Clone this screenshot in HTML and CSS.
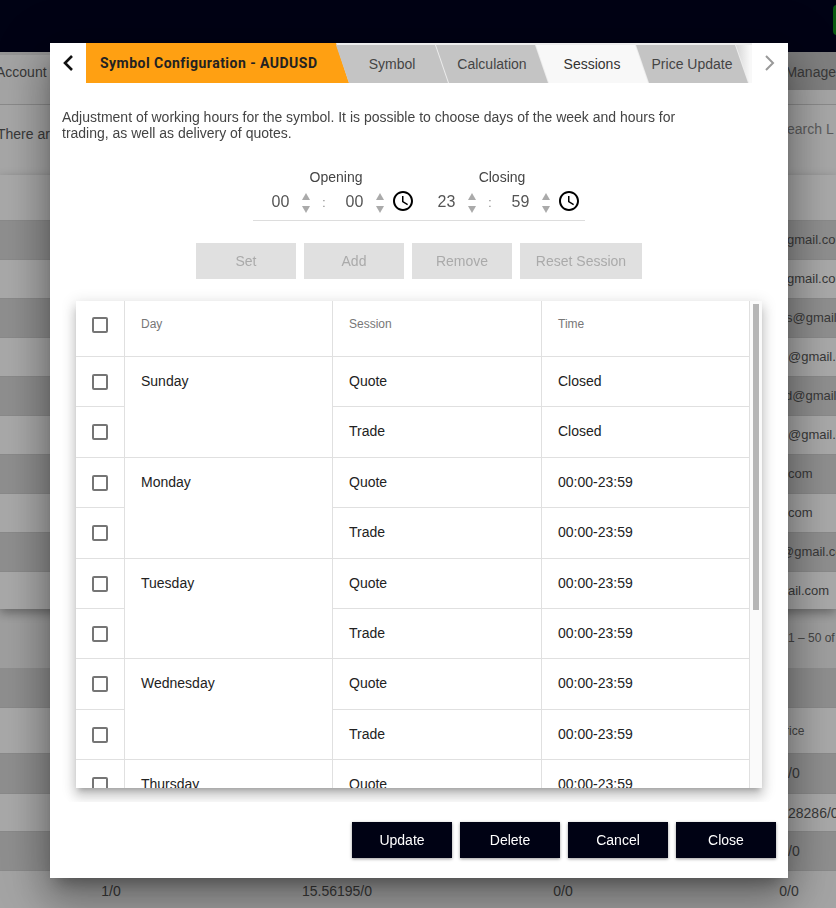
FILE: index.html
```html
<!DOCTYPE html>
<html lang="en">
<head>
    <meta charset="UTF-8">
    <meta name="viewport" content="width=device-width, initial-scale=1.0">
    <title>Symbol Configuration</title>
    <link rel="stylesheet" href="styles.css">
</head>
<body>
    <div class="page">
        <div class="topbar"><div class="status"></div></div>
        <div class="nav">
            <div class="nav-left">Account</div>
            <div class="nav-right">Manage</div>
        </div>
        <div class="strip"></div>
        <div class="search">
            <span class="search-note">There are</span>
            <span class="search-box">earch L</span>
        </div>
        <div class="users">
            <div class="row head"></div>
            <div class="row dark mail-g">gmail.com</div>
            <div class="row mail-g">gmail.com</div>
            <div class="row dark mail-s">s@gmail.com</div>
            <div class="row">@gmail.com</div>
            <div class="row dark mail-d">d@gmail.com</div>
            <div class="row">@gmail.com</div>
            <div class="row dark">com</div>
            <div class="row">com</div>
            <div class="row dark mail-w">@gmail.com</div>
            <div class="row last">ail.com</div>
        </div>
        <div class="pager">1 – 50 of</div>
        <div class="row dark tall"></div>
        <div class="row price-head">rice</div>
        <div class="row dark tall">/0</div>
        <div class="row price-row">28286/0</div>
        <div class="row dark">/0</div>
        <div class="totals">
            <span>1/0</span>
            <span>15.56195/0</span>
            <span>0/0</span>
            <span>0/0</span>
        </div>
    </div>

    <div class="overlay"></div>

    <div class="modal">
        <div class="modal-head">
            <div class="arrow">
                <svg width="12" height="18" viewBox="0 0 12 18"><path d="M10 2 L3 9 L10 16" fill="none" stroke="#111" stroke-width="2.6"/></svg>
            </div>
            <div class="tabs">
                <div class="tab-title">Symbol Configuration - AUDUSD</div>
                <div class="tab">Symbol</div>
                <div class="tab">Calculation</div>
                <div class="tab active">Sessions</div>
                <div class="tab">Price Update</div>
                <div class="tab more"></div>
            </div>
            <div class="arrow">
                <svg width="12" height="18" viewBox="0 0 12 18"><path d="M2 2 L9 9 L2 16" fill="none" stroke="#999" stroke-width="2"/></svg>
            </div>
        </div>

        <p class="desc">Adjustment of working hours for the symbol. It is possible to choose days of the week and hours for trading, as well as delivery of quotes.</p>

        <div class="times">
            <div class="time-group">
                <div class="time-label">Opening</div>
                <div class="time-row">
                    <div class="field"><span class="digits">00</span><span class="spin"><i class="up"></i><i class="down"></i></span></div>
                    <span class="colon">:</span>
                    <div class="field"><span class="digits">00</span><span class="spin"><i class="up"></i><i class="down"></i></span></div>
                    <svg class="clock" width="24" height="24" viewBox="0 0 24 24"><path d="M11.99 2C6.47 2 2 6.48 2 12s4.47 10 9.99 10C17.52 22 22 17.52 22 12S17.52 2 11.99 2zM12 20c-4.42 0-8-3.58-8-8s3.58-8 8-8 8 3.58 8 8-3.58 8-8 8zm.5-13H11v6l5.25 3.15.75-1.23-4.5-2.67z"/></svg>
                </div>
            </div>
            <div class="time-group">
                <div class="time-label">Closing</div>
                <div class="time-row">
                    <div class="field"><span class="digits">23</span><span class="spin"><i class="up"></i><i class="down"></i></span></div>
                    <span class="colon">:</span>
                    <div class="field"><span class="digits">59</span><span class="spin"><i class="up"></i><i class="down"></i></span></div>
                    <svg class="clock" width="24" height="24" viewBox="0 0 24 24"><path d="M11.99 2C6.47 2 2 6.48 2 12s4.47 10 9.99 10C17.52 22 22 17.52 22 12S17.52 2 11.99 2zM12 20c-4.42 0-8-3.58-8-8s3.58-8 8-8 8 3.58 8 8-3.58 8-8 8zm.5-13H11v6l5.25 3.15.75-1.23-4.5-2.67z"/></svg>
                </div>
            </div>
        </div>

        <div class="session-btns">
            <button class="btn-off">Set</button>
            <button class="btn-off">Add</button>
            <button class="btn-off">Remove</button>
            <button class="btn-off wide">Reset Session</button>
        </div>

        <div class="card-wrap">
            <div class="card">
                <table>
                    <tr>
                        <th class="check"><span class="box"></span></th>
                        <th>Day</th>
                        <th>Session</th>
                        <th>Time</th>
                    </tr>
                    <tr>
                        <td class="check"><span class="box"></span></td>
                        <td class="day" rowspan="2">Sunday</td>
                        <td>Quote</td>
                        <td>Closed</td>
                    </tr>
                    <tr class="r51">
                        <td class="check"><span class="box"></span></td>
                        <td>Trade</td>
                        <td>Closed</td>
                    </tr>
                    <tr>
                        <td class="check"><span class="box"></span></td>
                        <td class="day" rowspan="2">Monday</td>
                        <td>Quote</td>
                        <td>00:00-23:59</td>
                    </tr>
                    <tr class="r51">
                        <td class="check"><span class="box"></span></td>
                        <td>Trade</td>
                        <td>00:00-23:59</td>
                    </tr>
                    <tr>
                        <td class="check"><span class="box"></span></td>
                        <td class="day" rowspan="2">Tuesday</td>
                        <td>Quote</td>
                        <td>00:00-23:59</td>
                    </tr>
                    <tr>
                        <td class="check"><span class="box"></span></td>
                        <td>Trade</td>
                        <td>00:00-23:59</td>
                    </tr>
                    <tr class="r51">
                        <td class="check"><span class="box"></span></td>
                        <td class="day" rowspan="2">Wednesday</td>
                        <td>Quote</td>
                        <td>00:00-23:59</td>
                    </tr>
                    <tr>
                        <td class="check"><span class="box"></span></td>
                        <td>Trade</td>
                        <td>00:00-23:59</td>
                    </tr>
                    <tr class="r51">
                        <td class="check"><span class="box"></span></td>
                        <td class="day">Thursday</td>
                        <td>Quote</td>
                        <td>00:00-23:59</td>
                    </tr>
                </table>
                <div class="scroll"><div class="thumb"></div></div>
            </div>
        </div>

        <div class="footer-btns">
            <button class="btn-dark">Update</button>
            <button class="btn-dark">Delete</button>
            <button class="btn-dark">Cancel</button>
            <button class="btn-dark">Close</button>
        </div>
    </div>
</body>
</html>
```

FILE: styles.css
```css
html, body{
    margin: 0;
    height: 908px;
    overflow: hidden;
}
body{
    font-family: "Liberation Sans", Arial, sans-serif;
    font-size: 14px;
    color: #555;
    background: #ebebeb;
}

/* page behind the dialog */
.topbar{
    height: 52px;
    background: #00031e;
    display: flex;
    justify-content: flex-end;
}
.status{
    width: 10px;
    height: 30px;
    margin: 5px -7px 0 0;
    border-radius: 4px;
    background: #13851a;
}
.nav{
    height: 38px;
    display: flex;
    line-height: 40px;
}
.nav-left{
    width: 788px;
    margin-left: -4px;
    background: #f2f2f2;
    border-top: 3px solid #dcdcdc;
    box-sizing: border-box;
    line-height: 34px;
}
.nav-right{
    flex: 1;
    padding-left: 7px;
    background: #bcbcbc;
}
.strip{
    height: 14px;
    background: #f4f4f4;
    border-bottom: 1px solid #ccc;
}
.search{
    height: 70px;
    display: flex;
    justify-content: space-between;
    background: #f6f6f6;
}
.search-note{
    margin: 21px 0 0 -3px;
}
.search-box{
    margin: 16px 0 0 0;
    width: 49px;
    color: #888;
    white-space: nowrap;
}
.row{
    height: 39px;
    box-sizing: border-box;
    padding-left: 788px;
    line-height: 38px;
    white-space: nowrap;
    background: #f9f9f9;
    border-bottom: 1px solid #ccc;
}
.dark{
    background: #d3d3d3;
}
.tall{
    height: 40px;
}
.head{
    height: 46px;
}
.users{
    font-size: 13px;
    box-shadow: 0 4px 10px rgba(0, 0, 0, 0.35);
    position: relative;
}
.users .mail-g{
    padding-left: 787px;
}
.users .mail-s{
    padding-left: 786px;
}
.users .mail-d{
    padding-left: 785px;
}
.users .mail-w{
    padding-left: 781px;
}
.users .last{
    height: 37px;
    border-bottom: 0;
}
.pager{
    height: 59px;
    padding-left: 788px;
    line-height: 59px;
    font-size: 12px;
    white-space: nowrap;
    color: #666;
}
.price-head{
    height: 46px;
    line-height: 46px;
    font-size: 12px;
    padding-left: 785px;
    color: #666;
}
.price-row{
    height: 38px;
}
.totals{
    height: 37px;
    margin-left: -2px;
    display: grid;
    grid-template-columns: repeat(4, 226px);
    text-align: center;
    line-height: 40px;
    background: #f2f2f2;
}

.overlay{
    position: fixed;
    top: 0;
    bottom: 0;
    left: 0;
    right: 0;
    background-color: rgba(0, 0, 0, 0.32);
}

/* dialog */
.modal{
    position: absolute;
    top: 43px;
    left: 50px;
    width: 738px;
    height: 835px;
    background: #fff;
    box-shadow: 0 11px 15px -7px rgba(0, 0, 0, 0.3), 0 24px 38px 3px rgba(0, 0, 0, 0.22), 0 9px 46px 8px rgba(0, 0, 0, 0.2);
}
.modal-head{
    display: flex;
    height: 40px;
}
.arrow{
    width: 36px;
    height: 36px;
    padding-top: 2px;
    display: flex;
    align-items: center;
    justify-content: center;
}
.tabs{
    width: 666px;
    display: flex;
    overflow: hidden;
    background: #ededed;
}
.tab-title{
    flex: none;
    width: 263px;
    margin-right: -13px;
    padding-left: 14px;
    box-sizing: border-box;
    font-family: Roboto, sans-serif;
    font-weight: 700;
    font-size: 14px;
    letter-spacing: 0.47px;
    line-height: 40px;
    white-space: nowrap;
    color: #222;
    background: #ffa012;
    clip-path: polygon(0 0, 250px 0, 100% 100%, 0 100%);
    position: relative;
}
.tab{
    flex: none;
    width: 112px;
    height: 38px;
    margin: 2px -12px 0 0;
    text-align: center;
    line-height: 39px;
    color: #444;
    background: #c4c4c4;
    clip-path: polygon(0 0, calc(100% - 13px) 0, 100% 100%, 13px 100%);
}
.tab.active{
    background: #f8f8f8;
    color: #333;
}
.tab.more{
    background: linear-gradient(to right, #d6d6d6, #f8f8f8 14px);
}

.desc{
    margin: 26px 0 0 12px;
    width: 640px;
    line-height: 16px;
    color: #444;
}

.times{
    width: 332px;
    box-sizing: border-box;
    margin: 28px auto 0;
    padding: 0 0 5px 6px;
    display: flex;
    gap: 10px;
    border-bottom: 1px solid #ddd;
}
.time-group{
    width: 156px;
}
.time-label{
    line-height: 16px;
    text-align: center;
    padding-right: 2px;
    color: #444;
}
.time-row{
    margin-top: 6px;
    height: 24px;
    display: flex;
    align-items: center;
}
.field{
    width: 52px;
    display: flex;
}
.digits{
    width: 42px;
    padding-left: 1px;
    box-sizing: border-box;
    text-align: center;
    font-size: 16px;
    color: #555;
}
.spin{
    width: 10px;
    height: 20px;
    display: flex;
    flex-direction: column;
    justify-content: space-between;
    align-items: center;
}
.up, .down{
    width: 0;
    height: 0;
    border-left: 4px solid transparent;
    border-right: 4px solid transparent;
}
.up{
    border-bottom: 7px solid #aaa;
}
.down{
    border-top: 7px solid #aaa;
}
.colon{
    width: 22px;
    text-align: center;
    padding-left: 4px;
    box-sizing: border-box;
    font-size: 12px;
    color: #888;
}
.clock{
    flex: none;
    align-self: flex-start;
    margin: -2px 0 0 6px;
}

.session-btns{
    margin-top: 22px;
    display: flex;
    justify-content: center;
    gap: 8px;
}
button{
    font-family: "Liberation Sans", Arial, sans-serif;
    font-size: 14px;
    width: 100px;
    height: 36px;
    border: 0;
    padding: 0;
}
.btn-off{
    background: #e0e0e0;
    color: #aaa;
}
.wide{
    width: 122px;
}

.card-wrap{
    margin: 8px 12px 0;
    padding: 14px;
    height: 515px;
    box-sizing: border-box;
    overflow: hidden;
}
.card{
    height: 487px;
    display: flex;
    overflow: hidden;
    color: #222;
    box-shadow: 0 5px 5px -3px rgba(0, 0, 0, 0.2), 0 8px 10px 1px rgba(0, 0, 0, 0.14), 0 3px 14px 2px rgba(0, 0, 0, 0.12);
}
table{
    flex: none;
    width: 674px;
    height: 0;
    table-layout: fixed;
    border-collapse: separate;
    border-spacing: 0;
    background: #fff;
}
th, td{
    box-sizing: border-box;
    border-right: 1px solid #e0e0e0;
    border-bottom: 1px solid #e0e0e0;
    padding: 0 16px 2px;
    text-align: left;
    height: 50px;
}
.r51 td{
    height: 51px;
}
th{
    height: 56px;
    padding-bottom: 10px;
    font-size: 12px;
    font-weight: normal;
    color: #777;
}
th:nth-child(2), td.day{
    width: 208px;
}
th:nth-child(3){
    width: 209px;
}
.check{
    width: 49px;
    padding: 0;
    text-align: center;
    line-height: 0;
}
th.check{
    padding-bottom: 8px;
}
.box{
    display: inline-block;
    width: 16px;
    height: 16px;
    box-sizing: border-box;
    border: 2px solid #757575;
    border-radius: 2px;
}
td.day{
    vertical-align: top;
    padding-top: 16px;
    line-height: 16px;
}
.scroll{
    flex: 1;
    padding: 3px 3px 0;
    background: #fafafa;
}
.thumb{
    height: 306px;
    background: #b5b5b5;
}

.footer-btns{
    margin: 20px 12px 0 0;
    display: flex;
    justify-content: flex-end;
    gap: 8px;
}
.btn-dark{
    background: #000214;
    color: #fff;
    box-shadow: 0 1px 3px rgba(0, 0, 0, 0.4);
}
```
